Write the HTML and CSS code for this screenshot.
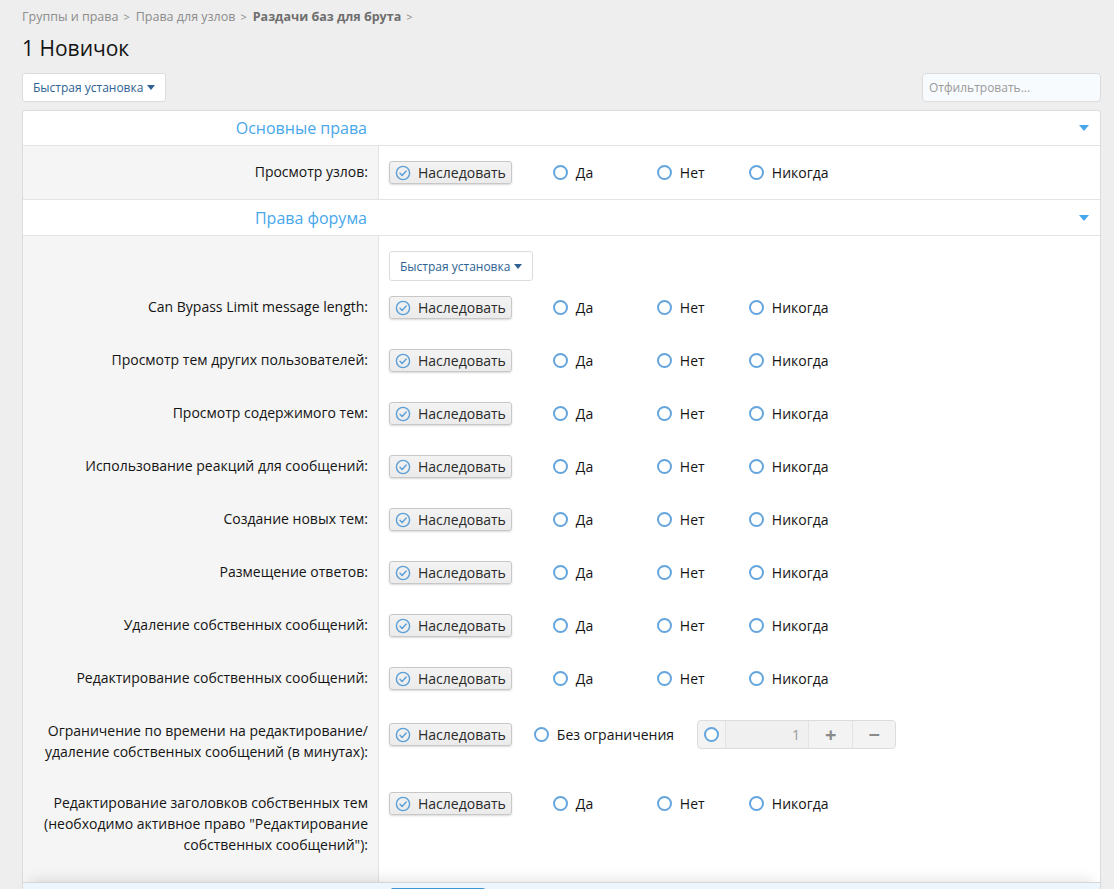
FILE: index.html
```html
<!DOCTYPE html>
<html lang="ru">
<head>
    <meta charset="UTF-8">
    <title>1 Новичок - Раздачи баз для брута</title>
    <link rel="stylesheet" href="styles.css">
</head>
<body>
    <ul class="breadcrumbs">
        <li><a href="#">Группы и права</a></li>
        <li><a href="#">Права для узлов</a></li>
        <li class="is-last"><a href="#">Раздачи баз для брута</a></li>
    </ul>
    <h1 class="page-title">1 Новичок</h1>

    <div class="toolbar">
        <button class="btn-menu">Быстрая установка <span class="caret-sm"></span></button>
        <input class="filter-input" type="text" placeholder="Отфильтровать...">
    </div>

    <form class="block">
        <h2 class="block-header">
            <span class="block-title">Основные права</span>
            <span class="caret"></span>
        </h2>
        <div class="row">
            <div class="row-label">Просмотр узлов:</div>
            <div class="row-value">
                <div class="choices">
                    <label class="choice-inherit"><svg class="check" viewBox="0 0 16 16"><circle cx="8" cy="8" r="6.6"/><path d="M5 8.3l2.1 2.1L11.2 6"/></svg>Наследовать</label>
                    <label class="choice choice--yes"><span class="radio"></span>Да</label>
                    <label class="choice choice--no"><span class="radio"></span>Нет</label>
                    <label class="choice"><span class="radio"></span>Никогда</label>
                </div>
            </div>
        </div>

        <h2 class="block-header">
            <span class="block-title">Права форума</span>
            <span class="caret"></span>
        </h2>
        <div class="row row--quick">
            <div class="row-label"></div>
            <div class="row-value">
                <button type="button" class="btn-menu">Быстрая установка <span class="caret-sm"></span></button>
            </div>
        </div>
        <div class="row">
            <div class="row-label">Can Bypass Limit message length:</div>
            <div class="row-value">
                <div class="choices">
                    <label class="choice-inherit"><svg class="check" viewBox="0 0 16 16"><circle cx="8" cy="8" r="6.6"/><path d="M5 8.3l2.1 2.1L11.2 6"/></svg>Наследовать</label>
                    <label class="choice choice--yes"><span class="radio"></span>Да</label>
                    <label class="choice choice--no"><span class="radio"></span>Нет</label>
                    <label class="choice"><span class="radio"></span>Никогда</label>
                </div>
            </div>
        </div>
        <div class="row">
            <div class="row-label">Просмотр тем других пользователей:</div>
            <div class="row-value">
                <div class="choices">
                    <label class="choice-inherit"><svg class="check" viewBox="0 0 16 16"><circle cx="8" cy="8" r="6.6"/><path d="M5 8.3l2.1 2.1L11.2 6"/></svg>Наследовать</label>
                    <label class="choice choice--yes"><span class="radio"></span>Да</label>
                    <label class="choice choice--no"><span class="radio"></span>Нет</label>
                    <label class="choice"><span class="radio"></span>Никогда</label>
                </div>
            </div>
        </div>
        <div class="row">
            <div class="row-label">Просмотр содержимого тем:</div>
            <div class="row-value">
                <div class="choices">
                    <label class="choice-inherit"><svg class="check" viewBox="0 0 16 16"><circle cx="8" cy="8" r="6.6"/><path d="M5 8.3l2.1 2.1L11.2 6"/></svg>Наследовать</label>
                    <label class="choice choice--yes"><span class="radio"></span>Да</label>
                    <label class="choice choice--no"><span class="radio"></span>Нет</label>
                    <label class="choice"><span class="radio"></span>Никогда</label>
                </div>
            </div>
        </div>
        <div class="row">
            <div class="row-label">Использование реакций для сообщений:</div>
            <div class="row-value">
                <div class="choices">
                    <label class="choice-inherit"><svg class="check" viewBox="0 0 16 16"><circle cx="8" cy="8" r="6.6"/><path d="M5 8.3l2.1 2.1L11.2 6"/></svg>Наследовать</label>
                    <label class="choice choice--yes"><span class="radio"></span>Да</label>
                    <label class="choice choice--no"><span class="radio"></span>Нет</label>
                    <label class="choice"><span class="radio"></span>Никогда</label>
                </div>
            </div>
        </div>
        <div class="row">
            <div class="row-label">Создание новых тем:</div>
            <div class="row-value">
                <div class="choices">
                    <label class="choice-inherit"><svg class="check" viewBox="0 0 16 16"><circle cx="8" cy="8" r="6.6"/><path d="M5 8.3l2.1 2.1L11.2 6"/></svg>Наследовать</label>
                    <label class="choice choice--yes"><span class="radio"></span>Да</label>
                    <label class="choice choice--no"><span class="radio"></span>Нет</label>
                    <label class="choice"><span class="radio"></span>Никогда</label>
                </div>
            </div>
        </div>
        <div class="row">
            <div class="row-label">Размещение ответов:</div>
            <div class="row-value">
                <div class="choices">
                    <label class="choice-inherit"><svg class="check" viewBox="0 0 16 16"><circle cx="8" cy="8" r="6.6"/><path d="M5 8.3l2.1 2.1L11.2 6"/></svg>Наследовать</label>
                    <label class="choice choice--yes"><span class="radio"></span>Да</label>
                    <label class="choice choice--no"><span class="radio"></span>Нет</label>
                    <label class="choice"><span class="radio"></span>Никогда</label>
                </div>
            </div>
        </div>
        <div class="row">
            <div class="row-label">Удаление собственных сообщений:</div>
            <div class="row-value">
                <div class="choices">
                    <label class="choice-inherit"><svg class="check" viewBox="0 0 16 16"><circle cx="8" cy="8" r="6.6"/><path d="M5 8.3l2.1 2.1L11.2 6"/></svg>Наследовать</label>
                    <label class="choice choice--yes"><span class="radio"></span>Да</label>
                    <label class="choice choice--no"><span class="radio"></span>Нет</label>
                    <label class="choice"><span class="radio"></span>Никогда</label>
                </div>
            </div>
        </div>
        <div class="row">
            <div class="row-label">Редактирование собственных сообщений:</div>
            <div class="row-value">
                <div class="choices">
                    <label class="choice-inherit"><svg class="check" viewBox="0 0 16 16"><circle cx="8" cy="8" r="6.6"/><path d="M5 8.3l2.1 2.1L11.2 6"/></svg>Наследовать</label>
                    <label class="choice choice--yes"><span class="radio"></span>Да</label>
                    <label class="choice choice--no"><span class="radio"></span>Нет</label>
                    <label class="choice"><span class="radio"></span>Никогда</label>
                </div>
            </div>
        </div>
        <div class="row">
            <div class="row-label">Ограничение по времени на редактирование/ удаление собственных сообщений (в минутах):</div>
            <div class="row-value">
                <div class="choices choices--limit">
                    <label class="choice-inherit"><svg class="check" viewBox="0 0 16 16"><circle cx="8" cy="8" r="6.6"/><path d="M5 8.3l2.1 2.1L11.2 6"/></svg>Наследовать</label>
                    <label class="choice choice--unlimited"><span class="radio"></span>Без ограничения</label>
                    <div class="number-box">
                        <span class="number-radio"><span class="radio"></span></span>
                        <input class="number-input" type="text" value="1">
                        <button type="button" class="number-btn">+</button>
                        <button type="button" class="number-btn">−</button>
                    </div>
                </div>
            </div>
        </div>
        <div class="row row--last">
            <div class="row-label">Редактирование заголовков собственных тем (необходимо активное право "Редактирование собственных сообщений"):</div>
            <div class="row-value">
                <div class="choices">
                    <label class="choice-inherit"><svg class="check" viewBox="0 0 16 16"><circle cx="8" cy="8" r="6.6"/><path d="M5 8.3l2.1 2.1L11.2 6"/></svg>Наследовать</label>
                    <label class="choice choice--yes"><span class="radio"></span>Да</label>
                    <label class="choice choice--no"><span class="radio"></span>Нет</label>
                    <label class="choice"><span class="radio"></span>Никогда</label>
                </div>
            </div>
        </div>

        <div class="block-footer">
            <button type="submit" class="btn-save">Сохранить</button>
        </div>
    </form>
</body>
</html>
```

FILE: styles.css
```css
* {
    box-sizing: border-box;
}

body {
    margin: 0;
    padding: 7px 13px 0 22px;
    background: #eeeeee;
    font-family: 'Open Sans', 'Noto Sans', sans-serif;
    font-size: 14px;
    color: #141414;
}

button, input {
    font-family: inherit;
}

/* header */

.breadcrumbs {
    list-style: none;
    margin: 0;
    padding: 0;
    display: flex;
    font-size: 12.5px;
    line-height: 20px;
}

.breadcrumbs li::after {
    content: '>';
    margin: 0 6px 0 5px;
    color: #8c8c8c;
    font-size: 11px;
}

.breadcrumbs a {
    color: #8c8c8c;
    text-decoration: none;
}

.breadcrumbs .is-last a {
    font-weight: bold;
    color: #6e6e6e;
}

.page-title {
    margin: 6px 0 10px;
    font-size: 21px;
    font-weight: normal;
    line-height: 30px;
    color: #141414;
}

.toolbar {
    display: flex;
    justify-content: space-between;
    align-items: center;
    margin-bottom: 8px;
}

.btn-menu {
    height: 29px;
    padding: 0 10px;
    background: #fff;
    border: 1px solid #dcdcdc;
    border-radius: 3px;
    color: #2d6293;
    font-size: 12px;
    cursor: pointer;
}

.caret-sm {
    display: inline-block;
    width: 0;
    height: 0;
    border-left: 4px solid transparent;
    border-right: 4px solid transparent;
    border-top: 5px solid #2d6293;
    vertical-align: 2px;
}

.filter-input {
    width: 179px;
    height: 29px;
    padding: 0 6px;
    background: #f8fbfe;
    border: 1px solid #dcdcdc;
    border-radius: 4px;
    font-size: 12px;
    color: #141414;
}

.filter-input::placeholder {
    color: #9a9a9a;
}

/* block */

.block {
    background: #fff;
    border: 1px solid #dcdcdc;
    border-radius: 3px;
}

.block-header {
    display: flex;
    align-items: center;
    margin: 0;
    height: 35px;
    border-bottom: 1px solid #e3e3e3;
    font-size: 16px;
    font-weight: normal;
}

.row + .block-header {
    border-top: 1px solid #e3e3e3;
    height: 37px;
}

.block-title {
    width: 355px;
    padding-right: 11px;
    text-align: right;
    color: #47a7eb;
}

.caret {
    margin-left: auto;
    margin-right: 11px;
    width: 0;
    height: 0;
    border-left: 5px solid transparent;
    border-right: 5px solid transparent;
    border-top: 6px solid #47a7eb;
}

.row {
    display: flex;
}

.row-label {
    width: 356px;
    flex-shrink: 0;
    padding: 15px 10px 15px 20px;
    background: #f5f5f5;
    border-right: 1px solid #e3e3e3;
    text-align: right;
    line-height: 21px;
    color: #141414;
}

.row-value {
    flex: 1;
    padding: 15px 10px;
}

.row--quick .row-label,
.row--quick .row-value {
    padding-bottom: 0;
}

.row--quick .btn-menu {
    height: 30px;
}

.row--last .row-label,
.row--last .row-value {
    padding-bottom: 27px;
}

/* choices */

.choices {
    display: flex;
    align-items: center;
    min-height: 21px;
}

.choice-inherit {
    display: flex;
    align-items: center;
    height: 23px;
    padding: 0 5px;
    margin-right: 41px;
    background: linear-gradient(#f3f3f3, #ebebeb);
    border: 1px solid #c8c8c8;
    border-radius: 3px;
    box-shadow: 0 1px 2px rgba(0, 0, 0, 0.15);
    color: #2a2a2a;
}

.check {
    width: 16px;
    height: 16px;
    margin-right: 7px;
    fill: none;
    stroke: #5b9fd8;
    stroke-width: 1.4;
    stroke-linecap: round;
    stroke-linejoin: round;
}

.choice {
    display: flex;
    align-items: center;
}

.choice--yes {
    width: 104px;
}

.choice--no {
    width: 92px;
}

.radio {
    display: inline-block;
    width: 15px;
    height: 15px;
    margin-right: 8px;
    border: 2px solid #64a5dd;
    border-radius: 50%;
    background: #fff;
}

.choices--limit .choice-inherit {
    margin-right: 22px;
}

.choice--unlimited {
    margin-right: 23px;
}

.number-box {
    display: flex;
    height: 29px;
    border: 1px solid #dcdcdc;
    border-radius: 4px;
    background: #f3f3f3;
    overflow: hidden;
}

.number-radio {
    display: flex;
    align-items: center;
    justify-content: center;
    width: 28px;
    border-right: 1px solid #e3e3e3;
}

.number-radio .radio {
    margin: 0;
}

.number-input {
    width: 83px;
    padding: 0 8px;
    border: none;
    border-right: 1px solid #e3e3e3;
    background: #f0f0f0;
    text-align: right;
    font-size: 14px;
    color: #9a9a9a;
}

.number-btn {
    width: 43px;
    border: none;
    background: #f3f3f3;
    color: #8a8a8a;
    font-size: 20px;
    font-weight: bold;
    line-height: 1;
    cursor: pointer;
}

.number-btn + .number-btn {
    border-left: 1px solid #e3e3e3;
}

/* footer */

.block-footer {
    position: relative;
    padding: 5px 10px 5px 367px;
    background: #edf5fd;
    border-top: 1px solid #d6d6d6;
    box-shadow: 0 -10px 14px -8px rgba(0, 0, 0, 0.12);
}

.btn-save {
    height: 34px;
    padding: 0 10px;
    background: #47a7eb;
    border: 1px solid #3d95d3;
    border-radius: 3px;
    color: #fff;
    font-size: 14px;
}
```
